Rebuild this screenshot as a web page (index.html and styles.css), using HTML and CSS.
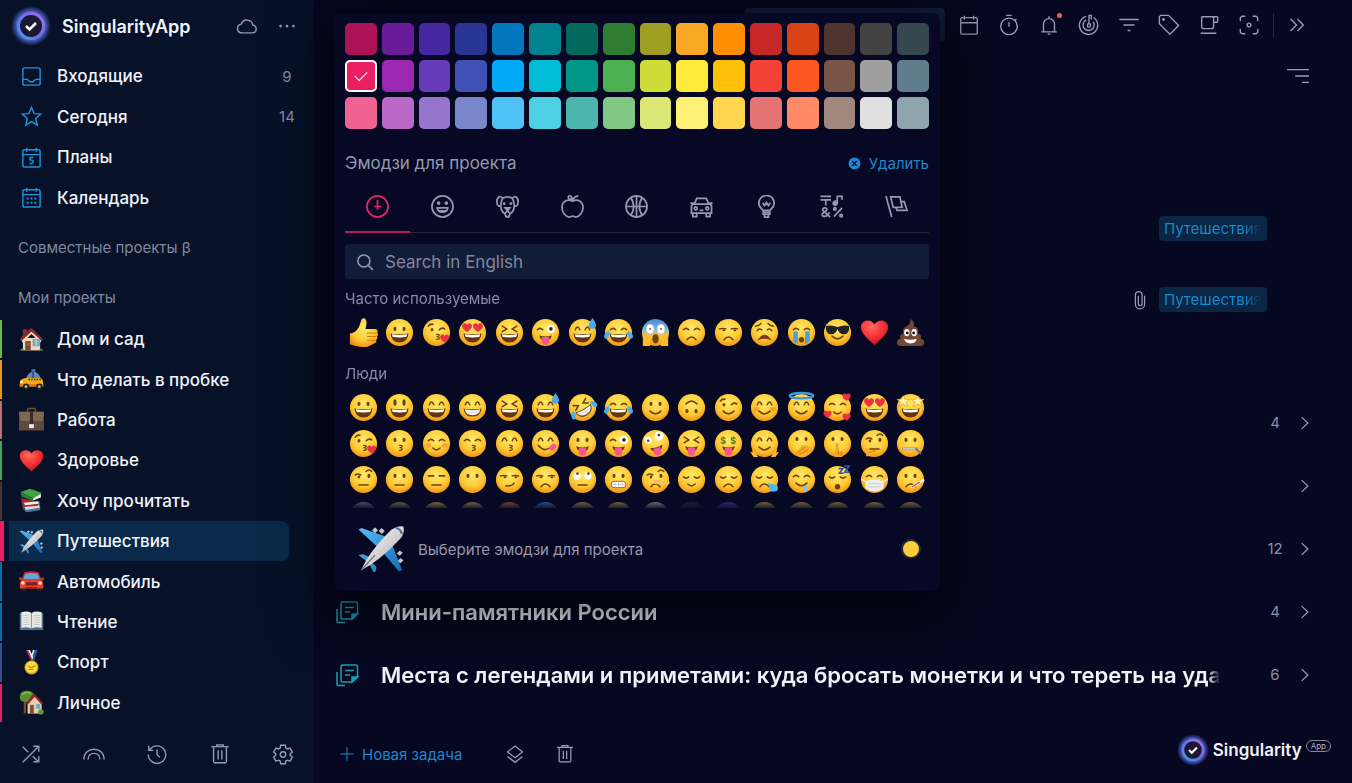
FILE: index.html
```html
<!DOCTYPE html>
<html lang="ru">
<head>
  <meta charset="UTF-8">
  <meta name="viewport" content="width=device-width, initial-scale=1.0">
  <title>SingularityApp</title>
  <link rel="stylesheet" href="styles.css">
</head>
<body>
  <!-- SVG sprite -->
  <svg class="sprite" aria-hidden="true">
    <defs>
      <radialGradient id="g-face" cx=".5" cy=".35" r=".68">
        <stop offset="0" stop-color="#ffe96a"/>
        <stop offset=".6" stop-color="#fdcb35"/>
        <stop offset="1" stop-color="#ef8d12"/>
      </radialGradient>
      <linearGradient id="g-scream" x1="0" y1="0" x2="0" y2="1">
        <stop offset="0" stop-color="#3f87d8"/>
        <stop offset=".4" stop-color="#8fbbd0"/>
        <stop offset=".65" stop-color="#fbc637"/>
        <stop offset="1" stop-color="#f19a1b"/>
      </linearGradient>
      <radialGradient id="g-heart" cx=".4" cy=".25" r=".8">
        <stop offset="0" stop-color="#ff6a5c"/>
        <stop offset=".5" stop-color="#f5343a"/>
        <stop offset="1" stop-color="#c3101f"/>
      </radialGradient>
      <linearGradient id="g-wing" x1="0" y1="0" x2="1" y2="1">
        <stop offset="0" stop-color="#56bdf5"/>
        <stop offset="1" stop-color="#1769b5"/>
      </linearGradient>
      <linearGradient id="g-body" x1="0" y1="0" x2="1" y2="1">
        <stop offset="0" stop-color="#ffffff"/>
        <stop offset="1" stop-color="#a9a9ae"/>
      </linearGradient>
      <linearGradient id="g-ring" x1="1" y1="0" x2="0" y2="1">
        <stop offset="0" stop-color="#a66ce0"/>
        <stop offset=".5" stop-color="#6b6fe6"/>
        <stop offset="1" stop-color="#3d9df2"/>
      </linearGradient>
      <radialGradient id="g-glow">
        <stop offset=".65" stop-color="#5f6ce0"/>
        <stop offset="1" stop-color="#4a6be0" stop-opacity="0"/>
      </radialGradient>
    </defs>

    <symbol id="logo" viewBox="0 0 40 40">
      <circle cx="20" cy="20" r="20" fill="url(#g-glow)"/>
      <circle cx="20" cy="20" r="12.500" fill="#1c1733" stroke="url(#g-ring)" stroke-width="3"/>
      <path d="M15 20l3.500 3.500 6.500-6.500" fill="none" stroke="#fff" stroke-width="2.600"/>
    </symbol>

    <!-- Interface icons -->
    <symbol id="i-cloud" viewBox="0 0 24 24"><path d="M6 19.500a4.800 4.800 0 0 1-.3-9.500 6.500 6.500 0 0 1 12.600 1 4.300 4.300 0 0 1 .2 8.500z"/></symbol>
    <symbol id="i-dots" viewBox="0 0 24 24"><g fill="currentColor" stroke="none"><circle cx="5" cy="12" r="1.500"/><circle cx="12" cy="12" r="1.500"/><circle cx="19" cy="12" r="1.500"/></g></symbol>
    <symbol id="i-inbox" viewBox="0 0 24 24"><rect x="3" y="3" width="18" height="18" rx="2"/><path d="M3 15h4.500l3 2.500h3l3-2.500H21"/></symbol>
    <symbol id="i-star" viewBox="0 0 24 24"><path d="M12 2.500l2.700 6.500 7 .5-5.400 4.600 1.700 6.900-6-3.700L6 21l1.700-6.900L2.300 9.500l7-.5z"/></symbol>
    <symbol id="i-plan" viewBox="0 0 24 24"><rect x="3" y="4" width="18" height="18" rx="1.500"/><path d="M3 9h18M7 2v4M17 2v4M14 12h-3.500v2.600c4.500-.8 4.500 4.200-.5 3.600"/></symbol>
    <symbol id="i-calendar" viewBox="0 0 24 24"><rect x="3" y="4" width="18" height="18" rx="2"/><path d="M3 9h18M7 2v4M17 2v4"/><path d="M7 13h2M11 13h2M15 13h2M7 17.500h2M11 17.500h2M15 17.500h2" stroke-width="2"/></symbol>
    <symbol id="i-shuffle" viewBox="0 0 24 24"><path d="M3 21L20 4M14.500 3.500h6v6M3 4l6 6M14 14.500l6 6M14.500 20.500h6v-6"/></symbol>
    <symbol id="i-rainbow" viewBox="0 0 24 24"><path d="M1 18C1 3 23 3 23 18M5.500 18c0-9 13-9 13 0"/></symbol>
    <symbol id="i-history" viewBox="0 0 24 24"><path d="M4 7.500a9.500 9.500 0 1 1-1.500 5M3 3v5h5M12 7v5.500l3 3"/></symbol>
    <symbol id="i-trash" viewBox="0 0 24 24"><path d="M2.500 4h19M8.500 3.500V2h7v1.500M5 4v16a1.500 1.500 0 0 0 1.500 1.500h11A1.500 1.500 0 0 0 19 20V4M10 8v10M14 8v10"/></symbol>
    <symbol id="i-gear" viewBox="0 0 24 24"><path d="M9.500 2.500h5l.6 3 1.700 1 2.900-1 2.500 4.300-2.300 2v1.600l2.300 2-2.500 4.300-2.900-1-1.700 1-.6 3h-5l-.6-3-1.700-1-2.900 1-2.500-4.300 2.300-2v-1.600l-2.300-2 2.500-4.300 2.900 1 1.700-1z"/><circle cx="12" cy="12.500" r="3"/></symbol>
    <symbol id="i-date" viewBox="0 0 24 24"><rect x="3" y="4" width="18" height="18" rx="1.500"/><path d="M3 9.500h18M7 2v4M17 2v4"/></symbol>
    <symbol id="i-timer" viewBox="0 0 24 24"><circle cx="12" cy="13.500" r="9"/><path d="M12 9v5M9 1.500h6M18.500 7l1.500-1.500"/></symbol>
    <symbol id="i-bell" viewBox="0 0 24 24"><path d="M3.500 19.500h17M6 19v-8a6 6 0 0 1 12 0v8M12 5V2.500M10.500 22h3"/></symbol>
    <symbol id="i-target" viewBox="0 0 24 24"><path d="M17 3.800A10 10 0 1 1 9 2.500M16.500 8.500a6 6 0 1 1-7.500-2M12 11V1.500h2.500V6"/><circle cx="12" cy="12.500" r="1.800"/></symbol>
    <symbol id="i-filter" viewBox="0 0 24 24"><path d="M1.500 6h21M6 12h12M10.500 18h3"/></symbol>
    <symbol id="i-tag" viewBox="0 0 24 24"><path d="M3 1.500h8.500L22.500 12.500l-9.500 9.500L1.500 10.500V3z"/><circle cx="6" cy="6" r=".8"/></symbol>
    <symbol id="i-cup" viewBox="0 0 24 24"><path d="M4 3h16.500a1 1 0 0 1 1 1v4a1 1 0 0 1-1 1H17M4 3v10.500A2.500 2.500 0 0 0 6.500 16h8a2.500 2.500 0 0 0 2.500-2.500V3M3 21h17"/></symbol>
    <symbol id="i-focus" viewBox="0 0 24 24"><path d="M2.500 8V5a2.500 2.500 0 0 1 2.500-2.500h3M16 2.500h3A2.500 2.500 0 0 1 21.500 5v3M21.500 16v3a2.500 2.500 0 0 1-2.500 2.500h-3M8 21.500H5A2.500 2.500 0 0 1 2.500 19v-3"/><circle cx="12" cy="12" r="2"/></symbol>
    <symbol id="i-more" viewBox="0 0 24 24"><path d="M5 5.500l6.500 6.500L5 18.500M12.500 5.500l6.500 6.500-6.500 6.500"/></symbol>
    <symbol id="i-sort" viewBox="0 0 24 24"><path d="M0 5h24M9 12h15M16.500 19H24"/></symbol>
    <symbol id="i-clip" viewBox="0 0 24 24"><path d="M17.500 7v10a5.500 5.500 0 0 1-11 0V6a4 4 0 0 1 8 0v10.500a2 2 0 0 1-4.500 0V7"/></symbol>
    <symbol id="i-chevron" viewBox="0 0 24 24"><path d="M8 5l7.500 7L8 19"/></symbol>
    <symbol id="i-note" viewBox="0 0 24 24"><path d="M7.500 2H21a1.500 1.500 0 0 1 1.500 1.500V14L17 19H7.500A1.500 1.500 0 0 1 6 17.500v-14A1.500 1.500 0 0 1 7.500 2zM10 7.500h9M10 12h5"/><path d="M2 9v12.500q0 1 1 1h7"/><path d="M17 19v-5h5.500z" fill="currentColor"/></symbol>
    <symbol id="i-plus" viewBox="0 0 24 24"><path d="M12 2v20M2 12h20"/></symbol>
    <symbol id="i-layers" viewBox="0 0 24 24"><path d="M12 2.500L21 9.500l-9 7-9-7zM3 15l9 7 9-7"/></symbol>
    <symbol id="i-search" viewBox="0 0 24 24"><circle cx="10.500" cy="10.500" r="8"/><path d="M16.500 16.500l6 6"/></symbol>
    <symbol id="i-remove" viewBox="0 0 24 24"><circle cx="12" cy="12" r="11" fill="currentColor" stroke="none"/><path d="M8 8l8 8M16 8l-8 8" stroke="#080825" stroke-width="2.500"/></symbol>

    <!-- Emoji category icons -->
    <symbol id="t-recent" viewBox="0 0 24 24"><circle cx="12" cy="12" r="11"/><path d="M12 5v10M8.500 12H16"/></symbol>
    <symbol id="t-people" viewBox="0 0 24 24"><circle cx="12" cy="12" r="11"/><path d="M6.500 13.500h11c-.5 6-10.500 6-11 0zM8 16.500h8"/><circle cx="8" cy="8.500" r="1" fill="currentColor"/><circle cx="16" cy="8.500" r="1" fill="currentColor"/></symbol>
    <symbol id="t-nature" viewBox="0 0 24 24"><path d="M7 3.500C4-.5.500 3 1 8c.3 3.500 3 5 4 2.500.5-2 .5-5 2-7q5-3 10 0c3-4 6.500-.5 6 4.500-.3 3.500-3 5-4 2.500-.5-2-.5-5-2-7M5 11c0 4 .5 7 4.500 8.500M19 11c0 4-.5 7-4.500 8.500M9.500 19q0 4 2.500 4t2.500-4q-1.500-1-2.500-3-1 2-2.500 3z"/><path d="M9.500 13.500h5L12 16.500z" fill="currentColor"/><circle cx="8.500" cy="9" r=".6" fill="currentColor"/><circle cx="15.500" cy="9" r=".6" fill="currentColor"/></symbol>
    <symbol id="t-food" viewBox="0 0 24 24"><path d="M12 6.500C7 3.500 1 6.500 1 13c0 5 4 10 7.500 10 1.500 0 2-1 3.500-1s2 1 3.500 1C19 23 23 18 23 13c0-6.500-6-9.500-11-6.500zM12 6.500c0-2-2-2-3.500-2.500C6 2 9-.5 11 2q1 1.500 1 4.500M12.500 4.500c1-2 3-3 5.500-3.500"/></symbol>
    <symbol id="t-sport" viewBox="0 0 24 24"><circle cx="12" cy="12" r="11"/><path d="M12 1v22M1 12h22M6 3c4 5 4 13 0 18M18 3c-4 5-4 13 0 18"/></symbol>
    <symbol id="t-travel" viewBox="0 0 24 24"><path d="M4.500 9.500L7 3.500h10l2.500 6M4 9.500h16a2.500 2.500 0 0 1 2.500 2.500v7h-21v-7A2.500 2.500 0 0 1 4 9.500zM3 19v3.500h4V19M17 19v3.500h4V19M.5 8.500H4M20 8.500h3.500M10 16h4"/><circle cx="6" cy="14" r="1.500"/><circle cx="18" cy="14" r="1.500"/></symbol>
    <symbol id="t-objects" viewBox="0 0 24 24"><path d="M8.500 16C6 13.500 4 12 4 8.500a8 8 0 0 1 16 0c0 3.500-2 5-4.500 7.500zM8.500 16v4h7v-4M8.500 18h7M10 20.500V23h4v-2.500M8 8l2 3 2-3 2 3 2-3"/></symbol>
    <symbol id="t-symbols" viewBox="0 0 24 24"><path d="M.5 1.500h11M.5 5h11M6 5v6M18 8.500V1.500h5V5M14.500 22.500l8.500-9"/><circle cx="15.800" cy="8.500" r="2" fill="currentColor"/><path d="M10.500 23L3 16c-1-3.500 5-3.500 4 0l-4 3c-3 3 3 6 7-1"/><circle cx="15.500" cy="14.500" r="1.300"/><circle cx="22" cy="21.500" r="1.300"/></symbol>
    <symbol id="t-flags" viewBox="0 0 24 24"><path d="M1 1l6 22M6 2h9.500l2.500 11H8.500zM17 7h3l3 9H12.500l-1-3"/></symbol>

    <!-- Object emojis -->
    <symbol id="e-home" viewBox="0 0 32 32">
      <path d="M5 3h5v9H5z" fill="#8f2a2b"/><path d="M5 14h22v16H5z" fill="#f0d8bb"/>
      <path d="M16 4L4 15v5L16 9l12 11v-5z" fill="#f7e6cf"/><path d="M16 1L7 8 1 16l2 2L16 6l13 12 2-2z" fill="#8f2a2b"/>
      <path d="M8 18h7v12H8z" fill="#7b472d"/><path d="M10 20h3v4h-3z" fill="#a36843"/>
      <path d="M18 16h8v8h-8z" fill="#6fb4dc" stroke="#97806b"/><path d="M22 16v8" stroke="#eee"/>
      <path d="M1 30q3-5 6 0zM25 30q3-5 6 0z" fill="#5b9b33"/>
    </symbol>
    <symbol id="e-taxi" viewBox="0 0 32 32">
      <path d="M9 15q3-9 9-9 7 0 10 9z" fill="#5c8cbc"/><path d="M16 3h5v3h-5z" fill="#4c80c0"/><path d="M18 6v9" stroke="#263746" stroke-width="1.500"/>
      <path d="M3 16q5-3 11-2h14q3 2 3 8v3H1v-4q0-4 2-5z" fill="#f4aa19"/>
      <path d="M12 16h17" stroke="#272727" stroke-width="2" stroke-dasharray="2 1.500"/><path d="M1 22h30v3H1z" fill="#d27c0c"/>
      <circle cx="9" cy="25" r="4" fill="#222"/><circle cx="26" cy="25" r="4" fill="#222"/><circle cx="9" cy="25" r="1.800" fill="#bbb"/><circle cx="26" cy="25" r="1.800" fill="#bbb"/><circle cx="3" cy="19" r="1.500" fill="#fff"/>
    </symbol>
    <symbol id="e-case" viewBox="0 0 32 32">
      <path d="M11 6V3q0-1 1-1h8q1 0 1 1v3" fill="none" stroke="#6d4b2b" stroke-width="2"/>
      <rect x="0" y="6" width="32" height="24" rx="1" fill="#5d4a3c"/><path d="M0 7q0-1 1-1h30q1 0 1 1l-2 11H2z" fill="#7f6853"/>
      <path d="M14 6h4v16h-4z" fill="#3f2a22"/><path d="M13 22h6v5h-6z" fill="#eceae5"/>
    </symbol>
    <symbol id="e-heart" viewBox="0 0 32 32">
      <path d="M16 30C11 25 1 18 1 10 1 2 12 0 16 7c4-7 15-5 15 3 0 8-10 15-15 20z" fill="url(#g-heart)"/>
    </symbol>
    <symbol id="e-books" viewBox="0 0 32 32">
      <path d="M3 14l2 13 4 4 18-3V18z" fill="#43576f"/><path d="M7 24l18-3 2 5-18 3z" fill="#dbe2e7"/><path d="M8 28l19-3v3L9 31z" fill="#4c7598"/>
      <path d="M3 13l22 5-1 5-18 1z" fill="#b9242d"/><path d="M6 19l19-2v3L8 22z" fill="#eee"/>
      <path d="M2 5l12-4 15 5-11 7z" fill="#43a146"/><path d="M2 5l16 8v4L3 11z" fill="#297d34"/><path d="M18 13l10-6v5l-10 4z" fill="#e8e8df"/>
    </symbol>
    <symbol id="e-plane" viewBox="0 0 32 32">
      <path d="M12 1.500l2 2-2 2-2-2zM16.500 2l2 2-2 2-2-2zM28.500 17l2 1.500-2 2-2-1.500zM29 22l2 1.500-2 2-2-1.500z" fill="#bfc3cc"/>
      <path d="M1 3l2-1 17 6-6 7zM23 12l7 18-2 1L17 18zM1 20l3-.500 7 3-3 3zM9 24l4 4-.5 3-1.500.5-3-6z" fill="url(#g-wing)"/>
      <path d="M3 30Q7 19 23 3q5-3 8-2 1 4-2 8Q15 24 3 30z" fill="url(#g-body)"/>
      <path d="M26 2q3 .5 4 4" fill="none" stroke="#557085" stroke-width="1.500"/><path d="M3 30l9-10" stroke="#75747a" stroke-width=".8"/>
    </symbol>
    <symbol id="e-car" viewBox="0 0 32 32">
      <path d="M3 22h6v6H3zM23 22h6v6h-6z" fill="#222"/><path d="M7 4q9-2 18 0l4 10H3z" fill="#c92620"/><path d="M8 6q8-2 16 0l3 8H5z" fill="#5fa6da"/>
      <path d="M0 11h4l3 2h18l3-2h4v3H0z" fill="#ce2b24"/><path d="M3 14h26q2 2 2 5v6H1v-6q0-3 2-5z" fill="#ee3b2f"/>
      <path d="M9 17h14v4H9z" fill="#752023"/><circle cx="5" cy="18" r="2.300" fill="#fff4cf"/><circle cx="27" cy="18" r="2.300" fill="#fff4cf"/><path d="M9 23h14v2H9z" fill="#972020"/>
    </symbol>
    <symbol id="e-book" viewBox="0 0 32 32">
      <path d="M1 5h30v22H1z" fill="#536d91"/><path d="M3 4q8-2 13 1 5-3 13-1v20q-8-2-13 1-5-3-13-1z" fill="#ecece8"/><path d="M16 5v20" stroke="#999" stroke-width="1.500"/>
      <path d="M5 8h8M5 11h8M5 14h8M5 17h8M5 20h8M19 8h8M19 11h8M19 14h8M19 17h8M19 20h8" stroke="#bbb"/>
    </symbol>
    <symbol id="e-medal" viewBox="0 0 32 32">
      <path d="M9 0h4l6 12-3 2z" fill="#d83247"/><path d="M20 0h4l-5 14h-3z" fill="#2d55a9"/><path d="M12 0h2l4 9-1 3zM18 0h2l-3 9-1-3z" fill="#fff"/>
      <circle cx="16" cy="22.500" r="9" fill="#d99b12"/><circle cx="16" cy="22" r="7.500" fill="#fcdb3f"/><path d="M12 20l3 3 6-3M12 25h6" stroke="#c9860d" stroke-width="1.500" fill="none"/>
    </symbol>
    <symbol id="e-garden" viewBox="0 0 32 32">
      <path d="M6 14h3v16H6z" fill="#754a25"/><path d="M1 11Q0 2 9 1q9-1 11 7 0 6-7 7Q3 17 1 11z" fill="#55902f"/><path d="M4 6q5-5 11-1" stroke="#88b94c" fill="none" stroke-width="2"/>
      <path d="M11 17l9-10 9 10v13H11z" fill="#ebcdae"/><path d="M20 5l-3 1-8 11 2 2 9-10 9 10 2-2z" fill="#8d2828"/>
      <path d="M14 19h5v11h-5z" fill="#815238"/><path d="M22 18h5v6h-5z" fill="#65aad0"/><circle cx="28" cy="28" r="3.500" fill="#5d9a35"/>
    </symbol>
    <symbol id="e-thumb" viewBox="0 0 32 32">
      <path d="M1 17q6 0 10-7l3-9q4-2 5 2 1 4-1 9h11q4 1 2 4 2 2 0 4 1 3-1 4 1 3-2 4l-8 4q-8 1-19-3z" fill="url(#g-face)"/>
      <path d="M20 16.500h10M20 20.500h10M20 24.500h9" stroke="#d07e15" stroke-width="1.200"/>
    </symbol>
    <symbol id="e-poop" viewBox="0 0 32 32">
      <path d="M16 1q6 4 3 8 7 1 5 8 5 1 3 6 5 1 4 5-1 3-5 3H6q-5 0-5-4 0-3 4-4-2-5 3-6-2-6 4-8 4-2 4-8z" fill="#714635"/>
      <ellipse cx="12" cy="16" rx="3" ry="4" fill="#fff"/><ellipse cx="20" cy="16" rx="3" ry="4" fill="#fff"/><circle cx="12.500" cy="16.500" r="1.600" fill="#1d1410"/><circle cx="19.500" cy="16.500" r="1.600" fill="#1d1410"/><path d="M9 23q7 2 14 0-1 5-7 5t-7-5z" fill="#fff"/>
    </symbol>
  </svg>

  <div class="app">
    <!-- Sidebar -->
    <aside class="sidebar">
      <header class="sidebar-header">
        <svg class="logo"><use href="#logo"/></svg>
        <h1>SingularityApp</h1>
        <button class="icon-btn" aria-label="Синхронизация"><svg class="icon"><use href="#i-cloud"/></svg></button>
        <button class="icon-btn" aria-label="Меню"><svg class="icon"><use href="#i-dots"/></svg></button>
      </header>

      <nav class="nav">
        <a href="#"><svg class="icon"><use href="#i-inbox"/></svg><span>Входящие</span><span class="count">9</span></a>
        <a href="#"><svg class="icon"><use href="#i-star"/></svg><span>Сегодня</span><span class="count">14</span></a>
        <a href="#"><svg class="icon"><use href="#i-plan"/></svg><span>Планы</span></a>
        <a href="#"><svg class="icon"><use href="#i-calendar"/></svg><span>Календарь</span></a>
      </nav>

      <h2 class="sidebar-title shared">Совместные проекты β</h2>
      <h2 class="sidebar-title">Мои проекты</h2>

      <nav class="projects">
        <a href="#" class="green"><svg><use href="#e-home"/></svg>Дом и сад</a>
        <a href="#" class="orange"><svg><use href="#e-taxi"/></svg>Что делать в пробке</a>
        <a href="#" class="rose"><svg><use href="#e-case"/></svg>Работа</a>
        <a href="#" class="emerald"><svg><use href="#e-heart"/></svg>Здоровье</a>
        <a href="#" class="brown"><svg><use href="#e-books"/></svg>Хочу прочитать</a>
        <a href="#" class="pink active"><svg><use href="#e-plane"/></svg>Путешествия</a>
        <a href="#" class="blue"><svg><use href="#e-car"/></svg>Автомобиль</a>
        <a href="#" class="blue"><svg><use href="#e-book"/></svg>Чтение</a>
        <a href="#" class="indigo"><svg><use href="#e-medal"/></svg>Спорт</a>
        <a href="#" class="pink"><svg><use href="#e-garden"/></svg>Личное</a>
      </nav>

      <footer class="sidebar-footer">
        <button class="icon-btn" aria-label="Случайная задача"><svg class="icon"><use href="#i-shuffle"/></svg></button>
        <button class="icon-btn" aria-label="Радуга"><svg class="icon"><use href="#i-rainbow"/></svg></button>
        <button class="icon-btn" aria-label="История"><svg class="icon"><use href="#i-history"/></svg></button>
        <button class="icon-btn" aria-label="Корзина"><svg class="icon"><use href="#i-trash"/></svg></button>
        <button class="icon-btn" aria-label="Настройки"><svg class="icon"><use href="#i-gear"/></svg></button>
      </footer>
    </aside>

    <!-- Main -->
    <main class="main">
      <header class="topbar">
        <div class="topbar-field"></div>
        <div class="tools">
          <button class="icon-btn" aria-label="Дата"><svg class="icon"><use href="#i-date"/></svg></button>
          <button class="icon-btn" aria-label="Таймер"><svg class="icon"><use href="#i-timer"/></svg></button>
          <button class="icon-btn bell" aria-label="Уведомления"><svg class="icon"><use href="#i-bell"/></svg></button>
          <button class="icon-btn" aria-label="Привычки"><svg class="icon"><use href="#i-target"/></svg></button>
          <button class="icon-btn" aria-label="Фильтр"><svg class="icon"><use href="#i-filter"/></svg></button>
          <button class="icon-btn" aria-label="Теги"><svg class="icon"><use href="#i-tag"/></svg></button>
          <button class="icon-btn" aria-label="Перерыв"><svg class="icon"><use href="#i-cup"/></svg></button>
          <button class="icon-btn" aria-label="Фокус"><svg class="icon"><use href="#i-focus"/></svg></button>
        </div>
        <button class="icon-btn more" aria-label="Ещё"><svg class="icon"><use href="#i-more"/></svg></button>
      </header>

      <div class="subbar">
        <button class="icon-btn" aria-label="Сортировка"><svg class="icon"><use href="#i-sort"/></svg></button>
      </div>

      <div class="tasks">
        <div class="task"><a href="#" class="tag"><span>Путешествия</span></a></div>
        <div class="task"><svg class="icon"><use href="#i-clip"/></svg><a href="#" class="tag"><span>Путешествия</span></a></div>
      </div>

      <div class="sections">
        <div class="section"><span class="count">4</span><button class="icon-btn" aria-label="Открыть"><svg class="icon"><use href="#i-chevron"/></svg></button></div>
        <div class="section"><span class="count"></span><button class="icon-btn" aria-label="Открыть"><svg class="icon"><use href="#i-chevron"/></svg></button></div>
        <div class="section"><span class="count">12</span><button class="icon-btn" aria-label="Открыть"><svg class="icon"><use href="#i-chevron"/></svg></button></div>
        <div class="section"><svg class="icon note"><use href="#i-note"/></svg><h3>Мини-памятники России</h3><span class="count">4</span><button class="icon-btn" aria-label="Открыть"><svg class="icon"><use href="#i-chevron"/></svg></button></div>
        <div class="section"><svg class="icon note"><use href="#i-note"/></svg><h3>Места с легендами и приметами: куда бросать монетки и что тереть на удачу</h3><span class="count">6</span><button class="icon-btn" aria-label="Открыть"><svg class="icon"><use href="#i-chevron"/></svg></button></div>
      </div>

      <footer class="main-footer">
        <button class="new-task"><svg class="icon"><use href="#i-plus"/></svg>Новая задача</button>
        <button class="icon-btn" aria-label="Секции"><svg class="icon"><use href="#i-layers"/></svg></button>
        <button class="icon-btn" aria-label="Удалить проект"><svg class="icon"><use href="#i-trash"/></svg></button>
        <div class="brand"><svg class="logo"><use href="#logo"/></svg>Singularity<span class="pill">App</span></div>
      </footer>

      <!-- Color and emoji popup -->
      <div class="picker">
        <div class="swatches" id="swatches" role="radiogroup" aria-label="Цвет проекта"></div>

        <div class="picker-head">
          <h2>Эмодзи для проекта</h2>
          <button class="remove"><svg class="icon"><use href="#i-remove"/></svg>Удалить</button>
        </div>

        <div class="tabs">
          <button class="active" aria-label="Часто используемые"><svg class="icon"><use href="#t-recent"/></svg></button>
          <button aria-label="Люди"><svg class="icon"><use href="#t-people"/></svg></button>
          <button aria-label="Природа"><svg class="icon"><use href="#t-nature"/></svg></button>
          <button aria-label="Еда"><svg class="icon"><use href="#t-food"/></svg></button>
          <button aria-label="Спорт"><svg class="icon"><use href="#t-sport"/></svg></button>
          <button aria-label="Транспорт"><svg class="icon"><use href="#t-travel"/></svg></button>
          <button aria-label="Объекты"><svg class="icon"><use href="#t-objects"/></svg></button>
          <button aria-label="Символы"><svg class="icon"><use href="#t-symbols"/></svg></button>
          <button aria-label="Флаги"><svg class="icon"><use href="#t-flags"/></svg></button>
        </div>

        <label class="search">
          <svg class="icon"><use href="#i-search"/></svg>
          <input type="text" placeholder="Search in English" aria-label="Search in English">
        </label>

        <div class="emoji-scroll">
          <h3>Часто используемые</h3>
          <div class="emoji-grid" id="recent"></div>
          <h3>Люди</h3>
          <div class="emoji-grid" id="people"></div>
        </div>

        <div class="preview">
          <svg class="preview-emoji"><use href="#e-plane"/></svg>
          <p>Выберите эмодзи для проекта</p>
          <button class="skin" aria-label="Тон кожи"></button>
        </div>
      </div>
    </main>
  </div>

  <script src="script.js"></script>
</body>
</html>
```

FILE: styles.css
```css
* {
  box-sizing: border-box;
}
body {
  margin: 0;
  background: #060720;
  color: #f1f3fb;
  font-family: Inter, "Noto Sans", sans-serif;
  font-size: 17px;
}
h1, h2, h3, p {
  margin: 0;
}
a {
  color: inherit;
  text-decoration: none;
}
button {
  padding: 0;
  border: 0;
  background: none;
  color: inherit;
  font: inherit;
  cursor: pointer;
}
.sprite {
  position: absolute;
  width: 0;
  height: 0;
}
.icon {
  display: block;
  flex: none;
  width: 24px;
  height: 24px;
  fill: none;
  stroke: currentColor;
  stroke-width: 1.5;
}
.icon-btn {
  display: flex;
  align-items: center;
  justify-content: center;
  flex: none;
  width: 24px;
  height: 24px;
  color: #9a9bb2;
}
.count {
  color: #8b90a8;
  font-size: 15px;
  text-align: center;
}
.app {
  display: flex;
  height: 100vh;
  min-height: 700px;
  overflow: hidden;
}

/* Sidebar */
.sidebar {
  display: flex;
  flex-direction: column;
  flex: none;
  width: 314px;
  background: #071229;
}
.sidebar-header {
  display: flex;
  align-items: center;
  height: 52px;
  padding: 0 15px 0 11px;
}
.logo {
  flex: none;
  width: 40px;
  height: 40px;
}
.sidebar-header h1 {
  flex: 1;
  margin-left: 11px;
  font-size: 18px;
  font-weight: 600;
}
.sidebar-header .icon-btn {
  margin-left: 16px;
}
.sidebar-header .icon {
  width: 22px;
  height: 22px;
}
.nav {
  display: grid;
  grid-auto-rows: 1fr;
  height: 162px;
  margin-top: 4px;
  font-weight: 500;
}
.nav a {
  display: flex;
  align-items: center;
  gap: 14px;
  padding: 0 15px 0 20px;
}
.nav .icon {
  width: 23px;
  height: 23px;
  color: #1c93dc;
}
.nav .count {
  width: 24px;
  margin-left: auto;
  font-weight: 400;
}
.sidebar-title {
  margin-top: 30px;
  padding-left: 18px;
  color: #8288a0;
  font-size: 15px;
  font-weight: 400;
  line-height: 20px;
}
.sidebar-title.shared {
  margin-top: 20px;
}
.projects {
  display: grid;
  grid-auto-rows: 1fr;
  flex: 1;
  margin-top: 11px;
  font-weight: 500;
}
.projects a {
  display: flex;
  align-items: center;
  gap: 13px;
  margin: 1px 0;
  padding-left: 17px;
  border-left: 2px solid;
}
.projects a svg {
  flex: none;
  width: 25px;
  height: 25px;
}
.projects .green { border-color: #66bb45; }
.projects .orange { border-color: #e99718; }
.projects .rose { border-color: #b97072; }
.projects .emerald { border-color: #43a456; }
.projects .brown { border-color: #493333; }
.projects .pink { border-color: #e91e63; }
.projects .blue { border-color: #106ca8; }
.projects .indigo { border-color: #3c489c; }
.projects a.active {
  margin: 0 25px 0 0;
  padding-left: 15px;
  border-left-width: 4px;
  border-radius: 0 8px 8px 0;
  background: linear-gradient(90deg, #071229 5px, #0a2a4b 5px);
}
.sidebar-footer {
  display: flex;
  align-items: center;
  justify-content: space-between;
  height: 60px;
  padding: 2px 19px 0;
}
.sidebar-footer .icon {
  width: 22px;
  height: 22px;
}

/* Main */
.main {
  position: relative;
  display: flex;
  flex-direction: column;
  flex: 1;
  min-width: 0;
}
.topbar {
  display: flex;
  align-items: center;
  justify-content: flex-end;
  height: 50px;
  padding-right: 43px;
}
.topbar-field {
  width: 200px;
  height: 34px;
  margin-right: 12px;
  border-radius: 4px;
  background: #111c3c;
}
.tools {
  display: flex;
  gap: 16px;
  padding-right: 12px;
  border-right: 1px solid #292a40;
}
.tools .icon, .more .icon, .subbar .icon {
  width: 22px;
  height: 22px;
}
.bell {
  position: relative;
}
.bell::after {
  content: "";
  position: absolute;
  top: 0;
  right: -1px;
  width: 5px;
  height: 5px;
  border-radius: 50%;
  background: #ee5d60;
}
.more {
  margin-left: 11px;
}
.subbar {
  display: flex;
  align-items: center;
  justify-content: flex-end;
  height: 52px;
  padding-right: 42px;
}
.tasks {
  padding: 91px 85px 0 20px;
}
.task {
  display: flex;
  align-items: center;
  justify-content: flex-end;
  gap: 9px;
  height: 71px;
  color: #9a9bb2;
}
.task .icon {
  width: 20px;
  height: 20px;
}
.tag {
  width: 108px;
  padding: 0 5px;
  border-radius: 4px;
  background: #0b2544;
  color: #128dd2;
  font-size: 15px;
  line-height: 25px;
}
.tag span {
  display: block;
  overflow: hidden;
  white-space: nowrap;
  -webkit-mask: linear-gradient(90deg, #000 80%, transparent);
  mask: linear-gradient(90deg, #000 80%, transparent);
}
.sections {
  padding: 56px 35px 0 21px;
}
.section {
  display: flex;
  align-items: center;
  justify-content: flex-end;
  height: 63px;
}
.section .note {
  color: #18a3b3;
}
.section h3 {
  flex: 1;
  min-width: 0;
  margin: 0 43px 0 22px;
  overflow: hidden;
  font-size: 22px;
  font-weight: 600;
  line-height: 32px;
  white-space: nowrap;
  -webkit-mask: linear-gradient(90deg, #000 calc(100% - 12px), transparent);
  mask: linear-gradient(90deg, #000 calc(100% - 12px), transparent);
}
.section .count {
  width: 24px;
  margin-right: 6px;
}
.section .icon-btn .icon {
  width: 20px;
  height: 20px;
}
.main-footer {
  display: flex;
  align-items: center;
  height: 58px;
  margin-top: auto;
  padding: 0 21px 0 25px;
}
.main-footer .icon-btn {
  margin-left: 26px;
}
.main-footer .icon {
  width: 20px;
  height: 20px;
}
.new-task {
  display: flex;
  align-items: center;
  gap: 7px;
  margin-right: 15px;
  color: #1c86ce;
  font-size: 15px;
}
.main-footer .new-task .icon {
  width: 16px;
  height: 16px;
}
.brand {
  display: flex;
  align-items: center;
  gap: 4px;
  margin-left: auto;
  padding-bottom: 8px;
  font-weight: 600;
}
.brand .logo {
  width: 32px;
  height: 32px;
}
.pill {
  margin-bottom: 8px;
  padding: 0 4px;
  border: 1px solid #85869b;
  border-radius: 6px;
  color: #b4b5c5;
  font-size: 8px;
  font-weight: 400;
  line-height: 10px;
}

/* Picker */
.picker {
  position: absolute;
  top: 13px;
  left: 20px;
  width: 606px;
  padding: 10px 11px 9px;
  border-radius: 8px;
  background: #070823;
  box-shadow: 0 16px 56px 12px rgba(0, 0, 0, .6);
  color: #9698b0;
}
.swatches {
  display: grid;
  grid-template-columns: repeat(16, 1fr);
  grid-auto-rows: 32px;
  gap: 5px;
}
.swatches input {
  display: grid;
  place-items: center;
  width: 100%;
  height: 100%;
  margin: 0;
  border-radius: 5px;
  appearance: none;
  cursor: pointer;
}
.swatches input:checked {
  border: 2px solid #fff;
}
.swatches input:checked::before {
  content: "";
  width: 11px;
  height: 6px;
  margin-bottom: 4px;
  border: solid #fff;
  border-width: 0 0 1px 1px;
  transform: rotate(-45deg);
}
.picker-head {
  display: flex;
  align-items: center;
  justify-content: space-between;
  height: 24px;
  margin-top: 22px;
}
.picker-head h2 {
  font-size: 17px;
  font-weight: 400;
}
.remove {
  display: flex;
  align-items: center;
  gap: 8px;
  color: #1c86ce;
  font-size: 15px;
}
.remove .icon {
  width: 13px;
  height: 13px;
}
.tabs {
  display: grid;
  grid-template-columns: repeat(9, 1fr);
  height: 52px;
  margin-top: 6px;
  border-bottom: 1px solid #25263c;
}
.tabs button {
  display: grid;
  place-items: center;
  margin-bottom: -1px;
  border-bottom: 2px solid transparent;
}
.tabs .icon {
  width: 23px;
  height: 23px;
  stroke-width: 1.8;
}
.tabs button.active {
  border-bottom-color: #b32059;
  color: #e3246b;
}
.search {
  display: flex;
  align-items: center;
  gap: 11px;
  height: 35px;
  margin-top: 11px;
  padding: 0 11px;
  border-radius: 4px;
  background: #121b37;
}
.search .icon {
  width: 18px;
  height: 18px;
  stroke-width: 2;
}
.search input {
  flex: 1;
  min-width: 0;
  padding: 0;
  border: 0;
  outline: 0;
  background: none;
  color: #fff;
  font: inherit;
}
.search input::placeholder {
  color: #8288a0;
  opacity: 1;
}
.emoji-scroll {
  height: 219px;
  margin-top: 10px;
  overflow: hidden;
  -webkit-mask: linear-gradient(#000 calc(100% - 12px), transparent calc(100% + 2px));
  mask: linear-gradient(#000 calc(100% - 12px), transparent calc(100% + 2px));
}
.emoji-scroll h3 {
  color: #888ba5;
  font-size: 15px;
  font-weight: 400;
  line-height: 20px;
}
.emoji-grid {
  display: grid;
  grid-template-columns: repeat(16, 1fr);
  grid-auto-rows: 36px;
  margin: 5px 0 14px;
}
.emoji-grid button {
  display: grid;
  place-items: center;
}
.emoji-grid svg {
  display: block;
  width: 29px;
  height: 29px;
  overflow: visible;
}
.preview {
  display: flex;
  align-items: center;
  gap: 13px;
  height: 66px;
  margin-top: 8px;
  padding-left: 12px;
}
.preview-emoji {
  width: 48px;
  height: 48px;
}
.preview p {
  flex: 1;
  font-size: 15px;
}
.skin {
  width: 20px;
  height: 20px;
  margin-right: 8px;
  border: 2px solid #24263e;
  border-radius: 50%;
  background: #ffcc3d;
}
```

FILE: script.js
```javascript
// Project colors, from dark to light
const colors = [
  '#ad1457 #6a1b9a #4527a0 #283593 #0277bd #00838f #00695c #2e7d32 #9e9d24 #f9a825 #ff8f00 #c62828 #d84315 #4e342e #424242 #37474f',
  '#e91e63 #9c27b0 #673ab7 #3f51b5 #03a9f4 #00bcd4 #009688 #4caf50 #cddc39 #ffeb3b #ffc107 #f44336 #ff5722 #795548 #9e9e9e #607d8b',
  '#f06292 #ba68c8 #9575cd #7986cb #4fc3f7 #4dd0e1 #4db6ac #81c784 #dce775 #fff176 #ffd54f #e57373 #ff8a65 #a1887f #e0e0e0 #90a4ae'
].join(' ').split(' ');

document.getElementById('swatches').innerHTML = colors.map(color =>
  `<input type="radio" name="color" aria-label="${color}" style="background:${color}" ${color === '#e91e63' ? 'checked' : ''}>`
).join('');

// Helpers for face parts, all on a 32x32 box
const line = (d, w = 1.7, c = '#70400b') => `<path d="${d}" fill="none" stroke="${c}" stroke-width="${w}" stroke-linecap="round"/>`;
const fill = (d, c) => `<path d="${d}" fill="${c}"/>`;
const dot = (x, y, rx, ry, c = '#70400b') => `<ellipse cx="${x}" cy="${y}" rx="${rx}" ry="${ry}" fill="${c}"/>`;
const heart = (x, y, s) => `<path transform="translate(${x} ${y}) scale(${s})" d="M0 4C-3 2-5 0-5-2c0-3 4-4 5-1 1-3 5-2 5 1 0 2-2 4-5 6z" fill="#ee3042"/>`;

const eyes = {
  dots: dot(11, 12, 1.7, 2.3) + dot(21, 12, 1.7, 2.3),
  tall: dot(11, 10.500, 1.7, 3.5) + dot(21, 10.500, 1.7, 3.5),
  low: dot(11, 11, 1.7, 2.3) + dot(21, 11, 1.7, 2.3),
  happy: line('M8 13q2.500-6 5 0M19 13q2.500-6 5 0'),
  closed: line('M7 13q3 3 6 0M19 13q3 3 6 0'),
  calm: line('M7 13q3-3 6 0M19 13q3-3 6 0'),
  squint: line('M8 9l5 3-5 3M24 9l-5 3 5 3'),
  hearts: heart(10, 11, 1.100) + heart(22, 11, 1.100),
  wink: line('M7 9q2-3 5-2') + dot(11, 13, 1.6, 2) + line('M19 13q3-3 6-1'),
  winkTongue: line('M7 13q3-3 6 0') + dot(22, 12, 4.5, 4.5, '#fff') + dot(22, 12, 2, 2, '#37261b'),
  flat: line('M7 12h6M19 12h6'),
  bored: line('M6 12q4-1 7 0M19 12q4-1 7 0') + dot(11, 13.500, 1.6, 1.2) + dot(23, 13.500, 1.6, 1.2),
  brow: line('M7 11q3-2 6 0M19 7q3-3 6 0') + dot(11, 13, 1.5, 1.800) + dot(22, 12, 1.7, 2.3),
  roll: dot(10, 12, 4, 4, '#fff') + dot(22, 12, 4, 4, '#fff') + dot(10.500, 9.500, 1.500, 1.500) + dot(22.500, 9.500, 1.500, 1.500),
  zany: dot(9, 10, 4, 4, '#fff') + dot(22, 9, 5, 5, '#fff') + dot(9, 11, 1.5, 1.5) + dot(22, 8, 1.5, 1.5),
  shocked: dot(10, 12, 4, 5, '#fff') + dot(22, 12, 4, 5, '#fff') + dot(10, 12, 1, 1) + dot(22, 12, 1, 1),
  weary: line('M6 9q4 0 6-3M26 9q-4 0-6-3M8 14q2-3 5-1M24 14q-2-3-5-1'),
  money: '<text x="7" y="16" font-size="10" font-weight="700" fill="#557a1e">$</text><text x="18" y="16" font-size="10" font-weight="700" fill="#557a1e">$</text>',
  shades: fill('M3 9q6-2 13 1 7-3 13-1 0 9-6 9-5 0-7-6-2 6-7 6-6 0-6-9z', '#222229'),
  stars: '<path d="M8 3l2 4 5 0-4 3 2 5-5-3-5 3 2-5-4-3h5zM24 3l2 4h5l-4 3 2 5-5-3-5 3 2-5-4-3h5z" fill="#fff0b0" stroke="#e79a2c" stroke-width=".7"/>'
};

const mouths = {
  grin: fill('M6 17q10 2 20 0-1 10-10 10T6 17z', '#66350d') + fill('M7.500 18q8.500 1.500 17 0l-1 3q-7 1-15 0z', '#fff'),
  teeth: fill('M6 17q10 2 20 0-1 9-10 9T6 17z', '#75400e') + fill('M7.500 18q8.500 2 17 0-1 6.500-8.500 6.500T7.500 18z', '#fff') + line('M8 21q8 1 16 0', .6, '#aaa'),
  smile: line('M10 20q6 6 12 0'),
  small: line('M12 21q4 4 8 0'),
  frown: line('M11 24q5-6 10 0'),
  kiss: line('M16 18q5 0 2 2.500l-2 0 2 0q3 3-2 3', 1.4),
  flat: line('M11 22h10'),
  smirk: line('M12 23q6 1 9-3'),
  tongue: fill('M9 19q7 3 14 0-1 6-7 6t-7-6z', '#7c340e') + fill('M12 21h8v6q-4 5-8 0z', '#f45695'),
  yum: line('M8 18q7 9 15 1') + fill('M19 21l5-5q5 1 4 4-3 4-6 4z', '#f45695'),
  grimace: '<rect x="8" y="18" width="16" height="7" rx="3" fill="#fff" stroke="#97561b"/>' + line('M8 21.500h16M12 18v7M16 18v7M20 18v7', .6, '#aaa'),
  scream: dot(16, 23, 3.5, 5),
  wail: fill('M8 25q8-13 16 0-8-4-16 0z', '#803b15'),
  open: dot(16, 24, 3, 3),
  zip: line('M8 22h15', 3, '#8e8f91') + line('M8 22h15', 1, '#fff') + line('M22 22l5 5', 2, '#707580'),
  none: ''
};

const extras = {
  sweat: fill('M27 0q-5 7-4 9 1 3 4 3t4-3q0-4-4-9z', '#4aa8ec'),
  tears: fill('M6 14q-6 2-6 7 2 4 5 0zM26 14q6 2 6 7-2 4-5 0z', '#4baeec'),
  streams: fill('M7 15h5v14l-5-3zM20 15h5v11l-5 3z', '#4b9fd8'),
  heart: heart(25, 23, 1),
  hearts: heart(26, 5, .9) + heart(5, 24, .9) + heart(26, 27, .9),
  halo: '<ellipse cx="16" cy="3" rx="13" ry="3" fill="none" stroke="#3b98e0" stroke-width="2.500"/>',
  blush: dot(7, 18, 3, 2.500, '#f27b2a88') + dot(25, 18, 3, 2.500, '#f27b2a88'),
  hug: fill('M4 31l-4-6 3 1-1-4 4 4 3 5zM28 31l4-6-3 1 1-4-4 4-3 5z', '#ffb92c'),
  hand: fill('M10 26l8-9 2 2 4-2-1 3 3-1-2 4 2 1-6 7q-8 2-10-5z', '#f9ad27') + line('M12 26l8-6M14 28l9-5', .8, '#b46a12'),
  finger: fill('M14 16q2-2 3 0v9h5q2 2-1 6h-7q-4-4 0-7z', '#f6a422') + line('M17 24v4M20 25v4', .8, '#b46a12'),
  think: fill('M7 30q-2-8 2-9l1 4 8-2q3 1-2 3l-1 4z', '#f9ad27') + line('M10 26q3-2 6-2', .8, '#b46a12'),
  nose: fill('M14 16l17 2q2 3-2 4l-14-1z', '#f3c25a'),
  snot: fill('M20 20l10 2q2 5-1 7-7 2-8-4z', '#50b4ef'),
  drool: fill('M18 23h4v6q-2 2-4 0z', '#82c5d6'),
  zzz: line('M18 4h4l-4 5h4M24 1h5l-5 7h5', 1.700, '#2d55b2'),
  mask: fill('M6 18q10-4 20 0v8q-10 7-20 0z', '#eee') + line('M6 18l-4-2M26 18l4-2', 1.500, '#eee') + line('M9 21q7-2 14 0M9 24h14', .7, '#bbb'),
  thermo: line('M18 24l12-7', 3, '#eee') + line('M18 24l8-5', 1.200, '#e33448'),
  hands: fill('M2 31V19q3-3 5 1l3 6v5zM30 31V19q-3-3-5 1l-3 6v5z', '#ffb92c')
};

// spec: "eyes mouth extra rotation", an object emoji id or a plain color
function face(spec) {
  if (spec.startsWith('e-')) {
    return `<svg viewBox="0 0 32 32"><use href="#${spec}"/></svg>`;
  }
  if (spec.startsWith('#')) {
    return `<svg viewBox="0 0 32 32"><circle cx="16" cy="16" r="15" fill="${spec}"/></svg>`;
  }
  const [eye, mouth, extra, turn] = spec.split(' ');
  const skin = eye === 'shocked' ? 'url(#g-scream)' : 'url(#g-face)';
  return `<svg viewBox="0 0 32 32"><circle cx="16" cy="16" r="15" fill="${skin}"/><g transform="rotate(${turn || 0} 16 16)">${eyes[eye]}${mouths[mouth]}${extras[extra] || ''}</g></svg>`;
}

function renderEmojis(id, list) {
  document.getElementById(id).innerHTML = list.map(spec => `<button aria-label="Эмодзи">${face(spec)}</button>`).join('');
}

renderEmojis('recent', [
  'e-thumb', 'dots grin', 'wink kiss heart', 'hearts grin', 'squint grin', 'winkTongue tongue', 'happy grin sweat', 'calm grin tears',
  'shocked scream hands', 'calm frown', 'bored frown', 'weary wail', 'calm open streams', 'shades smile', 'e-heart', 'e-poop'
]);

renderEmojis('people', [
  'dots grin', 'tall grin', 'happy grin', 'happy teeth', 'squint grin', 'happy grin sweat', 'squint teeth tears -30', 'calm grin tears',
  'dots smile', 'dots smile none 180', 'wink smile', 'happy smile blush', 'happy smile halo', 'calm small hearts', 'hearts grin', 'stars grin',
  'wink kiss heart', 'dots kiss', 'calm small blush', 'calm kiss', 'happy kiss', 'happy yum', 'dots tongue', 'winkTongue tongue',
  'zany tongue none -15', 'squint tongue', 'money tongue', 'happy smile hug', 'low none hand', 'low none finger', 'brow flat think', 'dots zip',
  'brow flat', 'dots flat', 'flat flat', 'dots none', 'bored smirk', 'bored frown', 'roll flat', 'dots grimace',
  'brow frown nose', 'closed small', 'closed frown', 'closed frown snot', 'calm smile drool', 'closed open zzz', 'calm none mask', 'dots frown thermo',
  '#77778e', '#77a35c', '#c5a45b', '#b7a14a', '#b9683f', '#4783c4', '#b7a14a', '#b7a14a',
  '#aaa4a0', '#38343e', '#4549a0', '#b7a14a', '#b7a14a', '#b7a14a', '#b7a14a', '#b7a14a'
]);
```
